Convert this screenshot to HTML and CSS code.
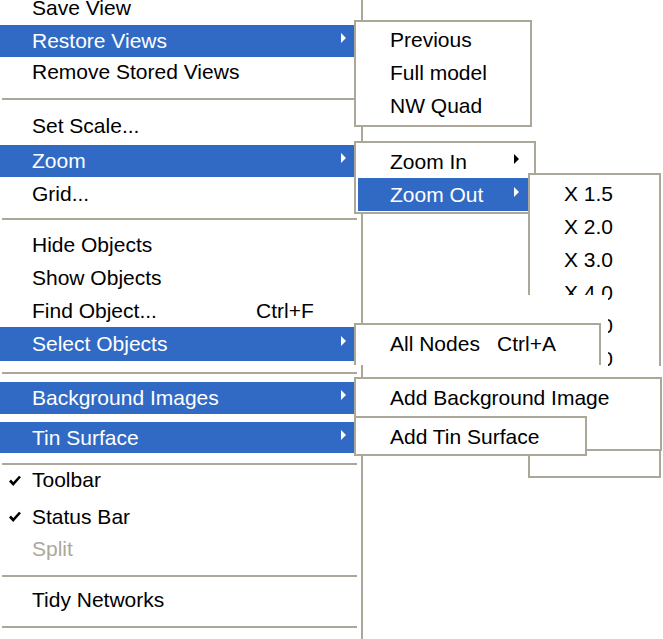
FILE: index.html
```html
<!DOCTYPE html>
<html>
<head>
<meta charset="utf-8">
<link rel="stylesheet" href="styles.css">
</head>
<body>
<div class="screen">
  <div class="main">
    <div class="item r-save">Save View</div>
    <div class="item sel r-restore">Restore Views<span class="arrow"></span></div>
    <div class="item r-remove">Remove Stored Views</div>
    <div class="sep s1"></div>
    <div class="item r-scale">Set Scale...</div>
    <div class="item sel r-zoom">Zoom<span class="arrow"></span></div>
    <div class="item">Grid...</div>
    <div class="sep s2"></div>
    <div class="item">Hide Objects</div>
    <div class="item">Show Objects</div>
    <div class="item"><span class="label-find">Find Object...</span><span>Ctrl+F</span></div>
    <div class="item sel r-select">Select Objects<span class="arrow"></span></div>
    <div class="sep s3"></div>
    <div class="item sel r-bg">Background Images<span class="arrow"></span></div>
    <div class="item sel r-tin">Tin Surface<span class="arrow"></span></div>
    <div class="sep s4"></div>
    <div class="item check r-toolbar"><svg class="tick" width="12" height="11" viewBox="0 0 12 11"><path d="M1 5.5 L4.2 9 L11 1.5" fill="none" stroke="#000" stroke-width="2.6"/></svg>Toolbar</div>
    <div class="item check r-status"><svg class="tick" width="12" height="11" viewBox="0 0 12 11"><path d="M1 5.5 L4.2 9 L11 1.5" fill="none" stroke="#000" stroke-width="2.6"/></svg>Status Bar</div>
    <div class="item disabled r-split">Split</div>
    <div class="sep s5"></div>
    <div class="item r-tidy">Tidy Networks</div>
    <div class="sep s6"></div>
  </div>

  <div class="pop p-restore">
    <div class="item">Previous</div>
    <div class="item">Full model</div>
    <div class="item">NW Quad</div>
  </div>

  <div class="pop p-zoom">
    <div class="item">Zoom In<span class="arrow"></span></div>
    <div class="item sel">Zoom Out<span class="arrow"></span></div>
  </div>

  <div class="pop p-zoomout">
    <div class="item">X 1.5</div>
    <div class="item">X 2.0</div>
    <div class="item">X 3.0</div>
    <div class="item">X 4.0</div>
    <div class="item">X 5.0</div>
    <div class="item">X 6.0</div>
    <div class="item"></div>
    <div class="item"></div>
    <div class="item"></div>
  </div>

  <div class="cover cover-a"></div>
  <div class="cover cover-b"></div>

  <div class="pop p-select">
    <div class="item"><span class="label-nodes">All Nodes</span><span>Ctrl+A</span></div>
  </div>

  <div class="pop p-bg">
    <div class="item">Add Background Image</div>
  </div>

  <div class="pop p-tin">
    <div class="item">Add Tin Surface</div>
  </div>
</div>
</body>
</html>
```

FILE: styles.css
```css
* { box-sizing: border-box; }

html, body {
  margin: 0;
  padding: 0;
  background: #fff;
}

body {
  font-family: "Liberation Sans", Arial, sans-serif;
  font-size: 21px;
  color: #000;
  overflow: hidden;
}

.screen {
  position: relative;
  width: 663px;
  height: 639px;
  overflow: hidden;
  background: #fff;
}

/* ---------- main menu ---------- */
.main {
  width: 363px;
  height: 639px;
  border-right: 2px solid #aca899;
  display: flex;
  flex-direction: column;
  overflow: hidden;
}

.item {
  display: flex;
  align-items: center;
  flex: none;
  height: 33px;
  padding-left: 32px;
  white-space: nowrap;
}

.sel {
  background: #316ac5;
  color: #fff;
}

.disabled { color: #aca899; }

.arrow {
  margin-left: auto;
  margin-right: 15px;
  margin-bottom: 6px;
  width: 0;
  height: 0;
  border-left: 5px solid currentColor;
  border-top: 5px solid transparent;
  border-bottom: 5px solid transparent;
}

.sep {
  flex: none;
  height: 2px;
  background: #aca899;
  margin-left: 2px;
  margin-right: 4px;
}

.label-find { width: 224px; }
.label-nodes { width: 107px; }

.check { padding-left: 9px; }
.tick { flex: none; margin-right: 11px; }

.r-save { margin-top: -9px; height: 34px; }
.r-restore { height: 32px; }
.r-remove { height: 30px; }
.s1 { margin-top: 11px; margin-bottom: 6px; }
.r-scale { height: 39px; }
.r-zoom { height: 32px; }
.s2 { margin-top: 8px; margin-bottom: 8px; }
.r-select { height: 34px; }
.s3 { margin-top: 11px; margin-bottom: 8px; }
.r-bg { height: 32px; }
.r-tin { height: 31px; margin-top: 8px; }
.s4 { margin-top: 10px; }
.r-toolbar { height: 30px; }
.r-status { margin-top: 5px; }
.r-split { height: 32px; }
.s5 { margin-top: 10px; margin-bottom: 7px; }
.r-tidy { height: 32px; }
.s6 { margin-top: 10px; }

/* ---------- popup submenus ---------- */
.pop {
  position: absolute;
  background: #fff;
  border: 2px solid #aca899;
  display: flex;
  flex-direction: column;
  overflow: hidden;
}

.pop .item { padding-left: 34px; }

.p-restore {
  left: 354px; top: 20px; width: 178px; height: 107px;
  padding-top: 1px;
}

.p-zoom {
  left: 354px; top: 141px; width: 182px; height: 73px;
  padding: 2px 2px 1px 2px;
}
.p-zoom .item { padding-left: 32px; }
.p-zoom .arrow { margin-right: 13px; }

.p-zoomout {
  left: 528px; top: 173px; width: 133px; height: 305px;
  padding-top: 2px;
}

.cover {
  position: absolute;
  background: #fff;
}
.cover-a { left: 364px; top: 295px; width: 244px; height: 83px; }
.cover-b { left: 364px; top: 366px; width: 299px; height: 12px; }

.p-select {
  left: 354px; top: 323px; width: 247px; height: 42px;
  border-bottom: none;
  padding-top: 2px;
}

.p-bg {
  left: 354px; top: 377px; width: 308px; height: 74px;
  padding-top: 2px;
}

.p-tin {
  left: 354px; top: 416px; width: 233px; height: 40px;
  padding-top: 2px;
}
```
